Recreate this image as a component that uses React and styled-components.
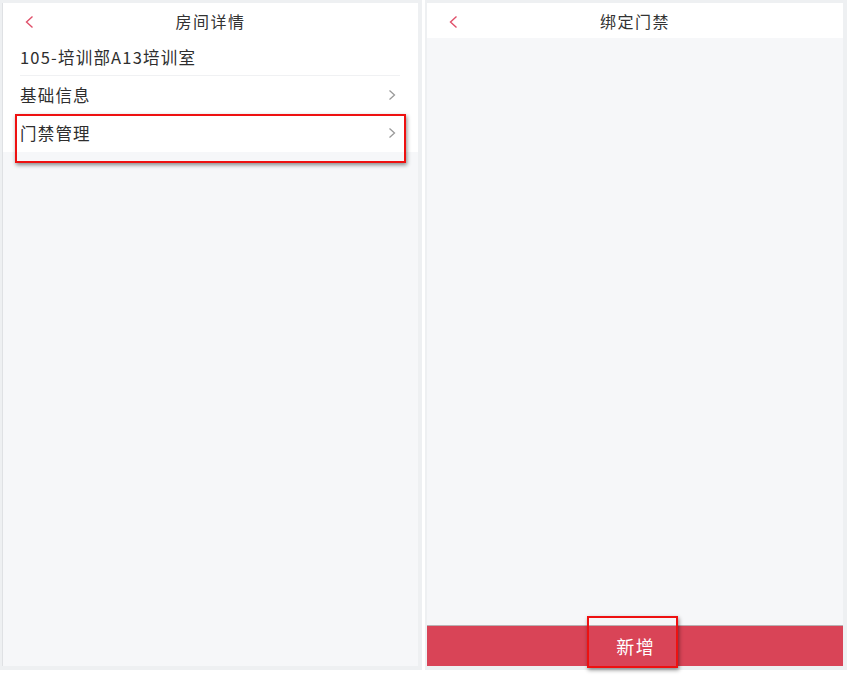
import React from "react";
import styled, { createGlobalStyle } from "styled-components";

const Global = createGlobalStyle`
  html, body { margin: 0; padding: 0; background: #ffffff; }
  body { font-family: "Noto Sans CJK SC", "Noto Sans", sans-serif; }
`;

const Stage = styled.div`
  display: flex;
  gap: 3px;
  width: 850px;
  height: 678px;
  background: #ffffff;
`;

const Frame = styled.div`
  position: relative;
  box-sizing: border-box;
  width: ${(p) => p.$w}px;
  height: 670px;
  padding: 3px 4px 4px ${(p) => p.$pl}px;
  background: #eef0f2;
`;

const Screen = styled.div`
  display: flex;
  flex-direction: column;
  height: 100%;
  background: #f6f7f9;
  border-left: ${(p) => (p.$edge ? "1px solid #dfe1e4" : "none")};
`;

const Header = styled.div`
  display: flex;
  align-items: center;
  justify-content: center;
  position: relative;
  height: 35px;
  flex-shrink: 0;
  background: #ffffff;
  color: #333333;
  font-size: 16px;
  letter-spacing: 1.5px;
`;

const Back = styled.svg`
  position: absolute;
  left: 22px;
  top: 12px;
`;

const List = styled.div`
  display: flex;
  flex-direction: column;
  background: #ffffff;
`;

const Row = styled.div`
  display: flex;
  align-items: center;
  justify-content: space-between;
  height: 38px;
  margin: 0 18px 0 ${(p) => p.$ml}px;
  padding-right: 4px;
  border-bottom: ${(p) => (p.$line ? "1px solid #f0f1f3" : "none")};
  box-sizing: border-box;
  color: #2e2e2e;
  font-size: 16.5px;
  letter-spacing: 1.2px;
`;

const Spacer = styled.div`
  flex: 1;
`;

const Button = styled.div`
  display: flex;
  align-items: center;
  justify-content: center;
  height: 40px;
  flex-shrink: 0;
  background: #d94457;
  border-top: 1px solid #b9b0b2;
  color: #ffffff;
  font-size: 18px;
  letter-spacing: 1.5px;
  padding-left: 1.5px;
`;

const Mark = styled.div`
  position: absolute;
  left: ${(p) => p.$x}px;
  top: ${(p) => p.$y}px;
  width: ${(p) => p.$w}px;
  height: ${(p) => p.$h}px;
  box-sizing: border-box;
  border: 2px solid #ee1111;
  box-shadow: 1px 2px 4px rgba(0, 0, 0, 0.45);
  pointer-events: none;
`;

const Chevron = () => (
  <svg width="8" height="12" viewBox="0 0 8 12">
    <polyline points="1.5,1.5 6.5,6 1.5,10.5" fill="none" stroke="#9a9a9a" strokeWidth="1.3" />
  </svg>
);

const BackIcon = () => (
  <Back width="9" height="14" viewBox="0 0 9 14">
    <polyline points="7.5,1.5 1.5,7 7.5,12.5" fill="none" stroke="#e0506a" strokeWidth="1.4" />
  </Back>
);

export default function App() {
  return (
    <>
      <Global />
      <Stage>
        <Frame $w={422} $pl={2}>
          <Screen $edge>
            <Header>
              <BackIcon />
              房间详情
            </Header>
            <List>
              <Row $ml={17} $line>105-培训部A13培训室</Row>
              <Row $ml={17}>
                基础信息
                <Chevron />
              </Row>
              <Row $ml={17}>
                门禁管理
                <Chevron />
              </Row>
            </List>
          </Screen>
          <Mark $x={15} $y={114} $w={391} $h={49} />
        </Frame>
        <Frame $w={422} $pl={2}>
          <Screen>
            <Header>
              <BackIcon />
              绑定门禁
            </Header>
            <Spacer />
            <Button>新增</Button>
          </Screen>
          <Mark $x={162} $y={616} $w={91} $h={52} />
        </Frame>
      </Stage>
    </>
  );
}
